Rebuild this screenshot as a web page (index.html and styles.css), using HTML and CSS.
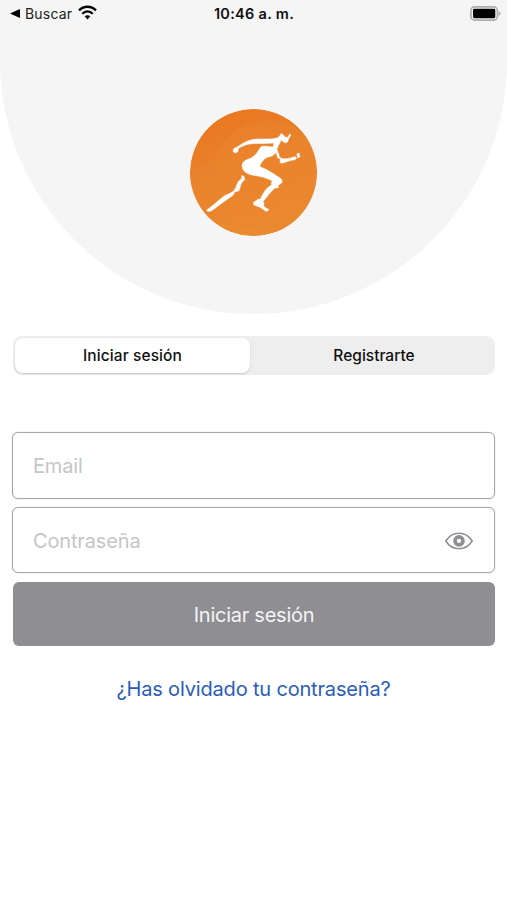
FILE: index.html
```html
<!DOCTYPE html>
<html lang="es">
<head>
    <meta charset="UTF-8">
    <meta name="viewport" content="width=device-width, initial-scale=1.0">
    <title>Iniciar sesión</title>
    <link rel="stylesheet" href="styles.css">
</head>
<body>

    <header class="hero">
        <div class="status-bar">
            <div class="status-left">
                <svg class="back-arrow" viewBox="0 0 10 9"><path d="M0 4.500 L10 0 V9 Z"/></svg>
                <span class="back-label">Buscar</span>
                <svg class="wifi" viewBox="0 0 54 42">
                    <path d="M3 15 C17 1 37 1 51 15" fill="none" stroke="#000" stroke-width="7"/>
                    <path d="M12 24.500 C21 16 33 16 42 24.500" fill="none" stroke="#000" stroke-width="6.500"/>
                    <path d="M19 32 C24 27.500 30 27.500 35 32 L27 41 Z"/>
                </svg>
            </div>
            <span class="clock">10:46 a. m.</span>
            <svg class="battery" viewBox="0 0 92 44">
                <rect x="2.500" y="2.500" width="79" height="39" rx="11" fill="#f5f5f5" stroke="#adadad" stroke-width="5"/>
                <rect x="9" y="8" width="66" height="28" rx="4"/>
                <path d="M85 15 C93 18 93 26 85 29 Z" fill="#adadad"/>
            </svg>
        </div>

        <svg class="logo" viewBox="17 21 380 380">
            <defs>
                <linearGradient id="orange" x1="0" y1="0" x2="0.3" y2="1">
                    <stop offset="0" stop-color="#ea751e"/>
                    <stop offset="0.45" stop-color="#e98029"/>
                    <stop offset="1" stop-color="#eb8a2f"/>
                </linearGradient>
                <clipPath id="disc"><circle cx="207" cy="211" r="190"/></clipPath>
            </defs>
            <g clip-path="url(#disc)">
                <circle cx="207" cy="211" r="190" fill="url(#orange)"/>
                <path d="M17 205 L90 172 L84 401 H17 Z" fill="#e9842e" opacity="0.6"/>
                <circle cx="250" cy="222" r="167" fill="#e98630" opacity="0.5"/>
            </g>
            <g fill="#fff" stroke="#fff" stroke-width="1.500" stroke-linejoin="round">
                <path d="M147 141 C151 136 158 136 165 130 C177 121 192 114 207 112 C230 109 249 112 266 110 C276 108 282 107 285 102 L290 94 L296 98 L301 105 L309 106 L316 96 L319 99 L312 110 L310 118 L304 123 L296 120 L291 113 L287 120 C286 126 281 129 280 134 L277 141 L280 149 L275 153 C267 157 265 163 254 164 C244 166 238 171 231 181 L225 193 C241 199 258 208 276 221 L289 229 C295 236 293 241 288 245 L281 249 L282 256 L270 258 C259 269 248 282 240 293 L235 296 L239 303 L237 309 C240 317 248 319 253 322 L247 328 C236 323 228 314 219 312 L208 308 L207 301 L219 292 L228 290 C233 278 240 267 249 257 L262 247 L260 241 L265 237 C247 227 226 222 206 219 C187 216 175 207 173 193 C172 183 178 176 187 173 C203 168 216 156 222 145 L230 133 L244 132 C252 135 258 133 266 135 L268 123 C237 126 218 122 194 126 C181 129 170 134 162 139 L160 149 L153 153 L146 149 Z"/>
                <path d="M276 150 L283 154 L284 164 L291 169 C303 171 315 169 325 165 L333 164 L336 168 L331 173 C316 174 305 180 292 183 L286 181 L288 172 L278 165 Z"/>
                <path d="M337 155 L343 153 L346 163 L341 168 L338 163 Z"/>
                <path d="M173 220 L170 231 L162 237 C156 247 156 256 149 265 C141 273 129 276 119 281 C105 292 88 308 74 318 L67 323 L70 328 L81 326 C98 315 117 298 136 286 L147 278 L150 269 L163 266 C168 257 167 248 173 240 L181 232 L178 222 Z"/>
            </g>
        </svg>
    </header>

    <main class="content">
        <div class="tabs">
            <button class="tab active" type="button">Iniciar sesión</button>
            <button class="tab" type="button">Registrarte</button>
        </div>

        <form class="login-form">
            <label class="field email">
                <input type="email" placeholder="Email">
            </label>
            <label class="field password">
                <input type="password" placeholder="Contraseña">
                <svg class="eye" viewBox="0 0 84 54" fill="none" stroke="#8e8e93">
                    <path d="M2.500 27 C22 -4 62 -4 81.500 27 C62 58 22 58 2.500 27 Z" stroke-width="4.500"/>
                    <circle cx="42" cy="26.500" r="12" stroke-width="11"/>
                </svg>
            </label>
            <button class="submit" type="button">Iniciar sesión</button>
        </form>

        <a class="forgot" href="#">¿Has olvidado tu contraseña?</a>
    </main>

</body>
</html>
```
FILE: styles.css
```css
* { box-sizing: border-box; }
body { margin: 0; background: #fff; font-family: Inter, "Liberation Sans", sans-serif; color: #111; }
button, input { font-family: inherit; border: 0; padding: 0; margin: 0; }
svg { display: block; flex: none; }

.hero { height: 313.5px; background: #f5f5f5; border-radius: 0 0 253.5px 253.5px; display: flex; flex-direction: column; align-items: center; }

.status-bar { width: 100%; height: 27px; padding: 0 6px 0 10px; display: grid; grid-template-columns: 1fr auto 1fr; align-items: center; }
.status-left { display: flex; align-items: center; }
.back-arrow { width: 10px; height: 9px; }
.back-label { font-size: 14px; letter-spacing: 0.2px; margin-left: 5px; color: #222; }
.wifi { width: 19px; height: 15px; margin-left: 6px; margin-bottom: 2px; }
.clock { font-size: 14.5px; font-weight: 600; letter-spacing: 0.3px; margin-left: -3px; }
.battery { width: 31px; height: 15px; justify-self: end; margin-bottom: 1px; }

.logo { width: 127px; height: 127px; margin-top: 82px; }

.content { padding: 22.5px 12px 0; display: flex; flex-direction: column; }

.tabs { height: 39px; margin-left: 1px; padding: 2px; background: #eee; border-radius: 9px; display: flex; }
.tab { flex: 1; padding-left: 5px; background: none; border-radius: 8px; font-size: 15.5px; font-weight: 500; color: #111; }
.tab.active { flex: 0 0 235px; padding-left: 0; letter-spacing: 0.1px; background: #fff; box-shadow: 0 1px 2px rgba(0, 0, 0, 0.16); }

.login-form { margin-top: 57px; display: flex; flex-direction: column; }
.field { border: 1px solid #a6a6a8; border-radius: 6px; box-shadow: 0 0 1px #a6a6a8; padding: 0 21px 0 20px; display: flex; align-items: center; }
.email { height: 67px; margin-bottom: 8px; }
.password { height: 66px; padding-top: 1px; margin-bottom: 9px; }
.field input { flex: 1; min-width: 0; background: none; font-size: 20px; letter-spacing: -0.15px; outline: none; }
.field input::placeholder { color: #c5c5c7; opacity: 1; }
.eye { width: 28px; height: 18px; }
.submit { height: 64px; padding-top: 1px; margin-left: 1px; background: #8e8e93; color: #f5f5f5; border-radius: 6px; font-size: 20px; letter-spacing: -0.25px; }

.forgot { align-self: center; margin-top: 31px; font-size: 20px; line-height: 24px; letter-spacing: -0.17px; color: #2a5db8; text-decoration: none; }
```
